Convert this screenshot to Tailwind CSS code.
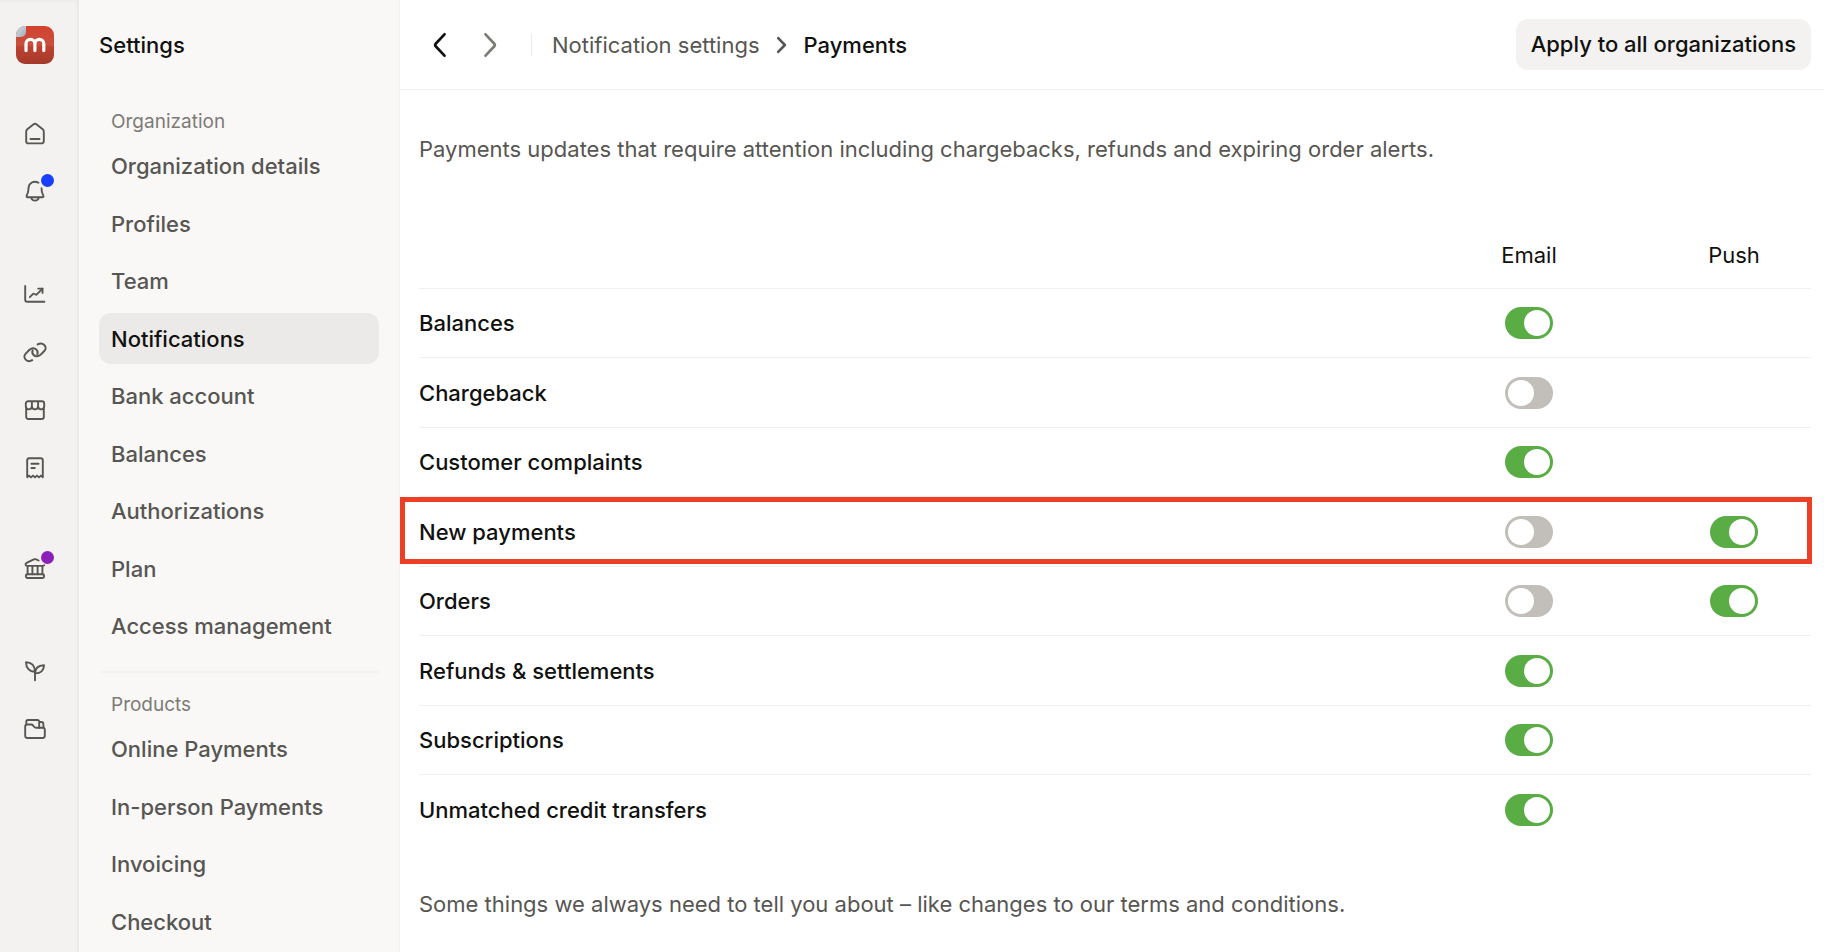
<!DOCTYPE html>
<html lang="en">
<head>
<meta charset="utf-8">
<title>Notification settings – Payments</title>
<script src="https://cdn.jsdelivr.net/npm/@tailwindcss/browser@4"></script>
</head>
<body class="flex h-screen overflow-hidden bg-white font-['Inter',sans-serif] text-[22px] leading-7 text-[#111110]">

<!-- Icon rail -->
<nav aria-label="Main" class="flex w-[79px] shrink-0 flex-col items-start bg-[#f3f2f0] pt-[26px] pl-4 shadow-[inset_-4px_3px_4px_-3px_rgba(0,0,0,0.06)]">
  <a href="#" aria-label="Dashboard" class="block">
    <svg class="block size-[38px]" viewBox="0 0 38 38" fill="none">
      <defs>
        <linearGradient id="logo" x1="0" y1="0" x2="0" y2="1">
          <stop offset="0" stop-color="#d4412d"/><stop offset=".5" stop-color="#c8503f"/><stop offset=".55" stop-color="#bd4130"/><stop offset="1" stop-color="#a33a2a"/>
        </linearGradient>
        <linearGradient id="fold" x1="0" y1="0" x2="1" y2="1">
          <stop offset="0" stop-color="#d3dbe2"/><stop offset="1" stop-color="#9fb0bd"/>
        </linearGradient>
        <clipPath id="tile"><rect width="38" height="38" rx="9"/></clipPath>
      </defs>
      <g clip-path="url(#tile)">
        <rect width="38" height="38" fill="url(#logo)"/>
        <path d="M0 0h10v6a5 5 0 0 1-5 5H0z" fill="url(#fold)"/>
      </g>
      <path d="M10 24.6v-6.800a4.400 4.400 0 0 1 8.900 0v6.800M18.900 17.800a4.400 4.400 0 0 1 8.900 0v6.800" stroke="#fff" stroke-width="3.200" stroke-linecap="round"/>
    </svg>
  </a>

  <ul class="mt-[41px] w-[38px] text-[#575652] [&_a]:flex [&_a]:h-[58px] [&_a]:items-center [&_a]:justify-center [&_svg]:size-6">
    <li><a href="#" aria-label="Home">
      <svg viewBox="0 0 24 24" fill="none" stroke="currentColor" stroke-width="1.900" stroke-linecap="round" stroke-linejoin="round"><path d="M3.200 9.400c0-.9.400-1.600 1.100-2.200l6.300-4.900a2.200 2.200 0 0 1 2.800 0l6.300 4.900c.7.600 1.100 1.300 1.100 2.200v9.800a2.200 2.200 0 0 1-2.200 2.200H5.400a2.200 2.200 0 0 1-2.200-2.200z"/><path d="M7.500 17h9"/></svg>
    </a></li>
    <li><a href="#" aria-label="Notifications" class="relative">
      <svg viewBox="0 0 24 24" fill="none" stroke="currentColor" stroke-width="1.900" stroke-linecap="round" stroke-linejoin="round"><path d="M15.400 2.800A6.400 6.400 0 0 0 5.500 8.200c0 3.600-.7 5.200-1.700 7.200-.5 1-.2 1.900 1 1.900h14.400c1.200 0 1.500-.9 1-1.900-1-2-1.700-3.600-1.700-7.200"/><path d="M8.200 17.600a3.900 3.900 0 0 0 7.600 0"/></svg>
      <span class="absolute top-[11px] right-0 size-[13px] rounded-full bg-[#1a3ff8]"></span>
    </a></li>
  </ul>
  <ul class="mt-[44px] w-[38px] text-[#575652] [&_a]:flex [&_a]:h-[58px] [&_a]:items-center [&_a]:justify-center [&_svg]:size-6">
    <li><a href="#" aria-label="Insights">
      <svg viewBox="0 0 24 24" fill="none" stroke="currentColor" stroke-width="1.900" stroke-linecap="round" stroke-linejoin="round"><path d="M2.200 4v13.800a1.900 1.900 0 0 0 1.900 1.900h17.300"/><path d="m6.800 15.200 3.300-3.300a1 1 0 0 1 1.200-.1l1.200.7a1 1 0 0 0 1.300-.2l5.700-5.700"/><path d="M15.200 6.600h4.300v4.300"/></svg>
    </a></li>
    <li><a href="#" aria-label="Payment links">
      <svg viewBox="0 0 24 24" fill="none" stroke="currentColor" stroke-width="2" stroke-linecap="round"><path id="loop" d="M9.300 20.200c-2.200 1.300-5 1-6.600-.6-1.700-1.700-1.700-4.300 0-6l3.300-3.400c2.300-2.300 5.500-2.500 7.400-.6 1.300 1.300 1.600 3 .9 4.600"/><use href="#loop" transform="rotate(180 12 12.300)"/></svg>
    </a></li>
    <li><a href="#" aria-label="Point of sale">
      <svg viewBox="0 0 24 24" fill="none" stroke="currentColor" stroke-width="1.900" stroke-linecap="round" stroke-linejoin="round"><path d="M3.200 11V19a2 2 0 0 0 2 2h13.600a2 2 0 0 0 2-2v-8"/><path d="M2.800 8.300V5.500a2.300 2.300 0 0 1 2.300-2.300h13.800a2.300 2.300 0 0 1 2.300 2.300v2.800a3 3 0 0 1-6.100 0 3 3 0 0 1-6.200 0 3 3 0 0 1-6.100 0zM8.900 8.300V3.400M15.100 8.300V3.400"/></svg>
    </a></li>
    <li><a href="#" aria-label="Invoices">
      <svg viewBox="0 0 24 24" fill="none" stroke="currentColor" stroke-width="1.900" stroke-linecap="round" stroke-linejoin="round"><path d="M4.200 21.200V4.200a2 2 0 0 1 2-2h11.600a2 2 0 0 1 2 2v17l-1.800-1.600-2 1.800-2-1.800-2 1.800-2-1.800-2 1.800-2-1.800z"/><path d="M8.400 7.700h7.200M8.400 12h3.400"/></svg>
    </a></li>
  </ul>
  <ul class="mt-[43px] w-[38px] text-[#575652] [&_a]:flex [&_a]:h-[58px] [&_a]:items-center [&_a]:justify-center [&_svg]:size-6">
    <li><a href="#" aria-label="Capital" class="relative">
      <svg viewBox="0 0 24 24" fill="none" stroke="currentColor" stroke-width="1.900" stroke-linecap="round" stroke-linejoin="round"><path d="M15.600 3.500 13.200 2.400a2.800 2.800 0 0 0-2.400 0L3.600 5.900c-1.700.8-1.300 3 .5 3h15.800c.6 0 1-.3 1.200-.7"/><path d="M4.600 9v8.200M9.400 9v8.200M14.600 9v8.200M19.400 9v8.200"/><rect x="2.900" y="17.300" width="18.200" height="3.700" rx="1.400"/></svg>
      <span class="absolute top-[11px] right-0 size-[13px] rounded-full bg-[#8a20b8]"></span>
    </a></li>
  </ul>
  <ul class="mt-[44px] w-[38px] text-[#575652] [&_a]:flex [&_a]:h-[58px] [&_a]:items-center [&_a]:justify-center [&_svg]:size-6">
    <li><a href="#" aria-label="Growth">
      <svg viewBox="0 0 24 24" fill="none" stroke="currentColor" stroke-width="1.900" stroke-linecap="round" stroke-linejoin="round"><path d="M12 21.200v-8.600"/><path d="M12 12.700C6.500 12.700 3 9 3 3.200c5.500 0 9 3.500 9 9.500z"/><path d="M12 14.400c0-5.100 3.300-8 9-8.200 0 5.300-3.500 8.400-9 8.200z"/></svg>
    </a></li>
    <li><a href="#" aria-label="Documents">
      <svg viewBox="0 0 24 24" fill="none" stroke="currentColor" stroke-width="1.900" stroke-linecap="round" stroke-linejoin="round"><path d="M2.200 9.200a1.700 1.700 0 0 1 1.700-1.700h4.300c.7 0 1.300.3 1.700.8l1.400 1.700c.4.500 1 .8 1.700.8h6.800a2 2 0 0 1 2 2v6a2.200 2.200 0 0 1-2.200 2.200H4.400a2.200 2.200 0 0 1-2.200-2.200z"/><path d="M3.300 7.500V4.600c0-.9.700-1.600 1.600-1.600h9.300c1.200 0 2 .8 2 2v5.700M16.200 5h2c1.200 0 2.200.9 2.200 2.200v3.600"/></svg>
    </a></li>
  </ul>
</nav>

<!-- Settings sidebar -->
<aside class="w-[321px] shrink-0 overflow-hidden border-r border-[#f3f2f0] bg-[#f9f8f7] pt-[31px] pr-5 pl-5 font-medium text-[#575652]">
  <h1 class="text-[#111110]">Settings</h1>

  <h2 class="mt-[49px] px-3 pb-px text-[19px] font-normal text-[#7d7b75]">Organization</h2>
  <ul class="[&_a]:flex [&_a]:h-[51px] [&_a]:w-full [&_a]:items-center [&_a]:rounded-xl [&_a]:px-3 [&>li]:flex [&>li]:h-[58px] [&>li]:items-center [&>li:nth-child(even)]:h-[57px]">
    <li><a href="#">Organization details</a></li>
    <li><a href="#">Profiles</a></li>
    <li><a href="#">Team</a></li>
    <li><a href="#" aria-current="page" class="bg-[#ebeae8] text-[#111110]">Notifications</a></li>
    <li><a href="#">Bank account</a></li>
    <li><a href="#">Balances</a></li>
    <li><a href="#">Authorizations</a></li>
    <li><a href="#">Plan</a></li>
    <li><a href="#">Access management</a></li>
  </ul>

  <h2 class="mt-4 border-t-2 border-[#f3f2f0] px-3 pt-[18px] pb-px text-[19px] font-normal text-[#7d7b75]">Products</h2>
  <ul class="[&_a]:flex [&_a]:h-[51px] [&_a]:w-full [&_a]:items-center [&_a]:rounded-xl [&_a]:px-3 [&>li]:flex [&>li]:h-[58px] [&>li]:items-center [&>li:nth-child(even)]:h-[57px]">
    <li><a href="#">Online Payments</a></li>
    <li><a href="#">In-person Payments</a></li>
    <li><a href="#">Invoicing</a></li>
    <li><a href="#">Checkout</a></li>
  </ul>
</aside>

<!-- Content -->
<main class="min-w-0 flex-1">
  <header class="flex h-[90px] items-center border-b border-[#f0efed] pr-[13px] pl-[27px]">
    <button type="button" aria-label="Back" class="flex size-7 items-center justify-center">
      <svg class="size-7" viewBox="0 0 28 28" fill="none" stroke="#111110" stroke-width="2.700" stroke-linecap="round" stroke-linejoin="round"><path d="M17.500 3.300 8.900 12.500a2.200 2.200 0 0 0 0 3L17.500 24.700"/></svg>
    </button>
    <button type="button" aria-label="Forward" class="ml-[23px] flex size-7 items-center justify-center">
      <svg class="size-7" viewBox="0 0 28 28" fill="none" stroke="#7d7b75" stroke-width="2.700" stroke-linecap="round" stroke-linejoin="round"><path d="M7.500 3.300l8.600 9.200a2.200 2.200 0 0 1 0 3L7.500 24.700"/></svg>
    </button>
    <nav aria-label="Breadcrumb" class="ml-[25px] flex items-center">
      <span class="h-[22px] w-px bg-[#ebeae8]"></span>
      <a href="#" class="ml-5 text-[#575652]">Notification settings</a>
      <svg class="mx-3 size-5" viewBox="0 0 20 20" fill="none" stroke="#575652" stroke-width="2.600" stroke-linecap="round" stroke-linejoin="round"><path d="M6.200 3.200 12.900 10l-6.700 6.800"/></svg>
      <span aria-current="page" class="font-medium">Payments</span>
    </nav>
    <button type="button" class="ml-auto h-[51px] rounded-xl bg-[#f3f2f0] px-[15px] pb-0.5 font-medium">Apply to all organizations</button>
  </header>

  <section class="pt-[45px] pr-[13px] pl-[19px]">
    <p class="text-[#575652]">Payments updates that require attention including chargebacks, refunds and expiring order alerts.</p>

    <table aria-label="Payment notifications" class="mt-[58px] w-full table-fixed border-separate border-spacing-0 text-left [&_input]:relative [&_input]:mx-auto [&_input]:block [&_input]:h-8 [&_input]:w-12 [&_input]:appearance-none [&_input]:rounded-full [&_input]:bg-[#c2beb9] [&_input]:before:absolute [&_input]:before:top-[3px] [&_input]:before:left-[3px] [&_input]:before:size-[26px] [&_input]:before:rounded-full [&_input]:before:bg-white [&_input:checked]:bg-[#5aac44] [&_input:checked]:before:left-[19px] [&_td]:border-b [&_td]:border-[#f0efed] [&_th]:border-b [&_th]:border-[#f0efed] [&_tbody_tr:last-child>*]:border-b-0">
      <thead>
        <tr class="h-[68px]">
          <td></td>
          <th scope="col" class="w-[256px] text-center font-normal">Email</th>
          <th scope="col" class="w-[154px] text-center font-normal">Push</th>
        </tr>
      </thead>
      <tbody class="[&_th]:font-medium [&>tr]:h-[69px] [&>tr:nth-child(even)]:h-[70px]">
        <tr><th scope="row">Balances</th><td><input type="checkbox" role="switch" aria-label="Balances by email" checked></td><td></td></tr>
        <tr><th scope="row">Chargeback</th><td><input type="checkbox" role="switch" aria-label="Chargeback by email"></td><td></td></tr>
        <tr><th scope="row">Customer complaints</th><td><input type="checkbox" role="switch" aria-label="Customer complaints by email" checked></td><td></td></tr>
        <tr class="relative"><th scope="row">New payments<span class="pointer-events-none absolute top-0 -right-px bottom-[3px] -left-[19px] border-5 border-[#ec3f25]"></span></th><td><input type="checkbox" role="switch" aria-label="New payments by email"></td><td><input type="checkbox" role="switch" aria-label="New payments by push" checked></td></tr>
        <tr><th scope="row">Orders</th><td><input type="checkbox" role="switch" aria-label="Orders by email"></td><td><input type="checkbox" role="switch" aria-label="Orders by push" checked></td></tr>
        <tr><th scope="row">Refunds &amp; settlements</th><td><input type="checkbox" role="switch" aria-label="Refunds and settlements by email" checked></td><td></td></tr>
        <tr><th scope="row">Subscriptions</th><td><input type="checkbox" role="switch" aria-label="Subscriptions by email" checked></td><td></td></tr>
        <tr><th scope="row">Unmatched credit transfers</th><td><input type="checkbox" role="switch" aria-label="Unmatched credit transfers by email" checked></td><td></td></tr>
      </tbody>
    </table>

    <p class="mt-[45px] text-[#575652]">Some things we always need to tell you about – like changes to our terms and conditions.</p>
  </section>
</main>
</body>
</html>
